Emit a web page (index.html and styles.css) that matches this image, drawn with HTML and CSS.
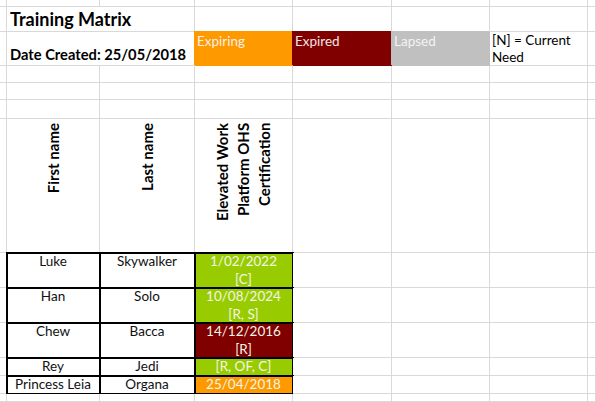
FILE: index.html
```html
<!DOCTYPE html>
<html>
<head>
<meta charset="utf-8">
<link rel="stylesheet" href="styles.css">
</head>
<body>
<div class="sheet">
  <!-- row 0 (partial) -->
  <div class="c"></div><div class="c"></div><div class="c"></div><div class="c"></div><div class="c"></div><div class="c"></div><div class="c"></div><div class="c"></div>
  <!-- row 1 -->
  <div class="c"></div>
  <div class="c span2 title">Training Matrix</div>
  <div class="c"></div><div class="c"></div><div class="c"></div><div class="c"></div><div class="c"></div>
  <!-- row 2 -->
  <div class="c"></div>
  <div class="c span2 created">Date Created: 25/05/2018</div>
  <div class="c legend orange">Expiring</div>
  <div class="c legend red">Expired</div>
  <div class="c legend grey">Lapsed</div>
  <div class="c legend note">[N] = Current Need</div>
  <div class="c"></div>
  <!-- row 3 -->
  <div class="c"></div><div class="c"></div><div class="c"></div><div class="c"></div><div class="c"></div><div class="c"></div><div class="c"></div><div class="c"></div>
  <!-- row 4 -->
  <div class="c"></div><div class="c"></div><div class="c"></div><div class="c"></div><div class="c"></div><div class="c"></div><div class="c"></div><div class="c"></div>
  <!-- row 5 -->
  <div class="c"></div><div class="c"></div><div class="c"></div><div class="c"></div><div class="c"></div><div class="c"></div><div class="c"></div><div class="c"></div>
  <!-- row 6 headers -->
  <div class="c"></div>
  <div class="c head"><span class="rot">First name</span></div>
  <div class="c head"><span class="rot">Last name</span></div>
  <div class="c head"><span class="rot multi">Elevated Work<br>Platform OHS<br>Certification</span></div>
  <div class="c"></div><div class="c"></div><div class="c"></div><div class="c"></div>
  <!-- Luke -->
  <div class="c"></div>
  <div class="c t">Luke</div>
  <div class="c t">Skywalker</div>
  <div class="c t green">1/02/2022<br>[C]</div>
  <div class="c"></div><div class="c"></div><div class="c"></div><div class="c"></div>
  <!-- Han -->
  <div class="c"></div>
  <div class="c t">Han</div>
  <div class="c t">Solo</div>
  <div class="c t green">10/08/2024<br>[R, S]</div>
  <div class="c"></div><div class="c"></div><div class="c"></div><div class="c"></div>
  <!-- Chew -->
  <div class="c"></div>
  <div class="c t">Chew</div>
  <div class="c t">Bacca</div>
  <div class="c t red">14/12/2016<br>[R]</div>
  <div class="c"></div><div class="c"></div><div class="c"></div><div class="c"></div>
  <!-- Rey -->
  <div class="c"></div>
  <div class="c t">Rey</div>
  <div class="c t">Jedi</div>
  <div class="c t green">[R, OF, C]</div>
  <div class="c"></div><div class="c"></div><div class="c"></div><div class="c"></div>
  <!-- Leia -->
  <div class="c"></div>
  <div class="c t">Princess Leia</div>
  <div class="c t">Organa</div>
  <div class="c t orange">25/04/2018</div>
  <div class="c"></div><div class="c"></div><div class="c"></div><div class="c"></div>
  <!-- last partial row -->
  <div class="c"></div><div class="c"></div><div class="c"></div><div class="c"></div><div class="c"></div><div class="c"></div><div class="c"></div><div class="c"></div>
</div>
</body>
</html>
```

FILE: styles.css
```css
html, body {
  margin: 0;
  padding: 0;
  background: #fff;
}
body {
  width: 596px;
  height: 402px;
  overflow: hidden;
  font-family: Lato, "Open Sans", "Liberation Sans", sans-serif;
  font-size: 14px;
  color: #000;
}
.sheet {
  display: grid;
  grid-template-columns: 7px 93px 95px 98px 99px 98px 98px 8px;
  grid-template-rows: 7px 25px 34px 17px 17px 19px 134px 35px 35px 35px 18px 18px 8px;
}
.c {
  box-sizing: border-box;
  border-right: 1px solid #d9d9d9;
  border-bottom: 1px solid #d9d9d9;
  background: #fff;
  overflow: visible;
  white-space: nowrap;
}
.span2 {
  grid-column: span 2;
}
.title {
  font-size: 18px;
  font-weight: 700;
  display: flex;
  align-items: flex-end;
  padding: 0 0 1px 3px;
  line-height: 22px;
}
.created {
  font-size: 14.7px;
  font-weight: 700;
  display: flex;
  align-items: flex-end;
  padding: 0 0 2px 3px;
  line-height: 18px;
}
.legend {
  padding: 0 0 0 2px;
  line-height: 18px;
  font-size: 13.5px;
}
.note {
  white-space: normal;
  line-height: 17px;
}
.orange { background: #ff9900; border-color: #ff9900; box-shadow: -1px -1px 0 0 #ff9900; color: #f7f1ea; }
.red { background: #800000; border-color: #800000; box-shadow: -1px -1px 0 0 #800000; color: #f2e6e6; }
.grey { background: #c0c0c0; border-color: #c0c0c0; box-shadow: -1px -1px 0 0 #c0c0c0; color: #f4f4f4; }
.green { background: #99cc00; border-color: #99cc00; color: #f3f7e6; }
.head {
  display: flex;
  justify-content: center;
  align-items: flex-start;
  padding-top: 4px;
}
.rot {
  writing-mode: vertical-rl;
  transform: rotate(180deg);
  font-weight: 700;
  font-size: 15px;
  line-height: 21px;
  text-align: end;
}
.t {
  text-align: center;
  line-height: 17.5px;
  font-size: 13.5px;
  outline: 2px solid #000;
  outline-offset: -1px;
  color: #111;
}
.t.green, .t.red, .t.orange {
  box-shadow: none;
  color: #f2f5ea;
}
```
